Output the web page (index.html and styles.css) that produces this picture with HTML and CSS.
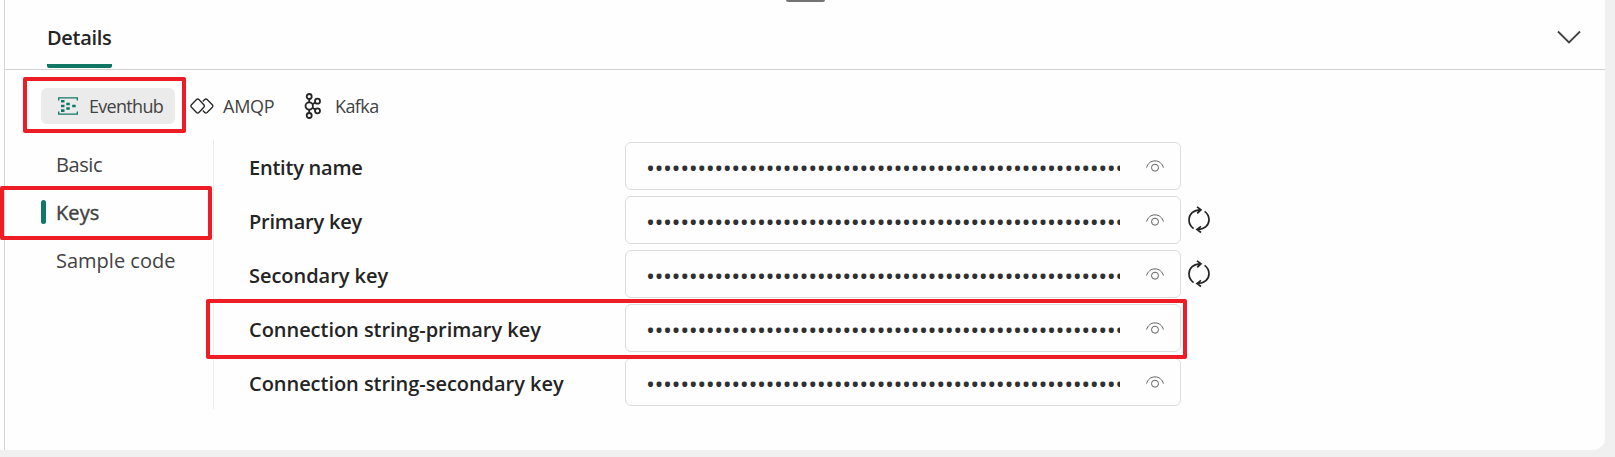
FILE: index.html
```html
<!DOCTYPE html>
<html lang="en">
<head>
<meta charset="utf-8">
<title>Details</title>
<link rel="stylesheet" href="styles.css">
</head>
<body>
<svg class="defs" width="0" height="0" aria-hidden="true">
  <symbol id="eye" viewBox="0 0 18 12"><path d="M.6 7.6C1.6 3.6 4.8.9 9 .9s7.4 2.700 8.400 6.700"/><circle cx="9" cy="7.700" r="3.500"/></symbol>
  <symbol id="refresh" viewBox="0 0 22 28"><path d="M5.600 22.600C2.700 20.600 1 17.400 1 13.800 1 8.200 5.500 3.800 12.500 3.800M9 .9l4 2.900-3.800 3.600M16.600 5.400c2.700 2 4.400 5 4.400 8.400 0 5.500-4.500 9.700-11.500 9.700M13 20.400l-4 3 4 3.100"/></symbol>
</svg>
<main class="panel">
  <div class="grip"></div>
  <header class="header">
    <h1 class="tab">Details</h1>
    <svg class="chevron" width="24" height="14" viewBox="0 0 24 14"><path d="M1 1.500 12 12.500 23 1.500"/></svg>
  </header>
  <nav class="protocols">
    <button class="protocol active">
      <svg width="20" height="18" viewBox="0 0 20 18"><path class="line" d="M.7 3.500V.9h18.600v2.600M.7 14.500v2.600h18.600v-2.600"/><path class="fill" d="M3 3h3.500v2.600H3zM3 7.700h3.500v2.600H3zM3 12.300h3.500v2.600H3zM8.300 5.700h3.500v2.600H8.300zM8.300 10.200h3.500v2.600H8.300zM14.200 7.700h3.500v2.600h-3.500z"/></svg>
      <span class="name-eventhub">Eventhub</span>
    </button>
    <button class="protocol amqp">
      <svg width="24" height="16" viewBox="0 0 24 16"><path d="M6.500 1.500Q7.700.5 8.900 1.500L13.800 6.700Q15 8 13.800 9.300L8.900 14.500Q7.700 15.500 6.500 14.500L1.500 9.300Q.3 8 1.500 6.700zM12.800 3.500 14.700 1.500Q15.900.5 17.100 1.500L22.300 6.700Q23.500 8 22.300 9.300L17.100 14.500Q15.900 15.500 14.700 14.500L12.800 12.500"/></svg>
      <span class="name-amqp">AMQP</span>
    </button>
    <button class="protocol kafka">
      <svg width="18" height="26" viewBox="0 0 18 26"><circle cx="5.200" cy="13" r="3.700"/><circle cx="5.200" cy="3.500" r="2.500"/><circle cx="5.200" cy="22.500" r="2.500"/><circle cx="13.500" cy="8.200" r="2.500"/><circle cx="13.500" cy="17.800" r="2.500"/><path d="M5.200 6v3.300M5.200 16.700V20M8.400 11.200l2.900-1.700M8.400 14.800l2.900 1.700"/></svg>
      <span class="name-kafka">Kafka</span>
    </button>
  </nav>
  <div class="content">
    <nav class="side">
      <a class="side-item basic">Basic</a>
      <a class="side-item current">Keys</a>
      <a class="side-item sample">Sample code</a>
    </nav>
    <section class="fields">
      <div class="row"><label class="l1">Entity name</label><div class="field"><span class="secret">••••••••••••••••••••••••••••••••••••••••••••••••••••••••</span><svg class="eye"><use href="#eye"/></svg></div></div>
      <div class="row"><label class="l2">Primary key</label><div class="field"><span class="secret">••••••••••••••••••••••••••••••••••••••••••••••••••••••••</span><svg class="eye"><use href="#eye"/></svg></div><svg class="refresh"><use href="#refresh"/></svg></div>
      <div class="row"><label class="l3">Secondary key</label><div class="field"><span class="secret">••••••••••••••••••••••••••••••••••••••••••••••••••••••••</span><svg class="eye"><use href="#eye"/></svg></div><svg class="refresh"><use href="#refresh"/></svg></div>
      <div class="row"><label class="l4">Connection string-primary key</label><div class="field"><span class="secret">••••••••••••••••••••••••••••••••••••••••••••••••••••••••</span><svg class="eye"><use href="#eye"/></svg></div></div>
      <div class="row"><label class="l5">Connection string-secondary key</label><div class="field"><span class="secret">••••••••••••••••••••••••••••••••••••••••••••••••••••••••</span><svg class="eye"><use href="#eye"/></svg></div></div>
    </section>
  </div>
</main>
<div class="mark mark-protocol"></div>
<div class="mark mark-keys"></div>
<div class="mark mark-connection"></div>
</body>
</html>
```
FILE: styles.css
```css
* { box-sizing: border-box; }
body {
  margin: 0;
  height: 457px;
  padding: 0 10px 7px 4px;
  background: #f0f0f0;
  font-family: "Open Sans", "Noto Sans", sans-serif;
  color: #242424;
  position: relative;
  overflow: hidden;
}
svg { fill: none; stroke: #242424; flex: none; }
.defs { position: absolute; }
.panel {
  height: 450px;
  background: #fefefe;
  border-left: 1px solid #d6d6d6;
  border-bottom-right-radius: 12px;
  box-shadow: -4px 0 0 #fefefe;
  position: relative;
}
.grip {
  position: absolute;
  left: 781px;
  top: -2px;
  width: 39px;
  height: 4px;
  border-radius: 2px;
  background: #757575;
}
.header {
  height: 70px;
  border-bottom: 1px solid #d1d1d1;
  padding: 0 24px 0 42px;
  display: flex;
  justify-content: space-between;
}
.tab {
  margin: 0;
  width: 65px;
  height: 68px;
  padding-top: 24px;
  border-bottom: 4px solid #117865;
  border-radius: 2px;
  font-size: 20px;
  line-height: 28px;
  font-weight: 600;
  letter-spacing: -0.3px;
  white-space: nowrap;
}
.chevron { margin-top: 30px; stroke: #424242; stroke-width: 1.8; }
.protocols { display: flex; padding: 18px 0 0 36px; height: 70px; }
.protocol {
  display: flex;
  align-items: center;
  height: 36px;
  padding: 0;
  border: 0;
  background: none;
  font: 400 18px/36px "Open Sans", "Noto Sans", sans-serif;
  color: #424242;
  white-space: nowrap;
}
.active { width: 134px; background: #ebebeb; border-radius: 6px; padding-left: 17px; gap: 11px; }
.line { stroke: #117865; stroke-width: 1.3; }
.fill { fill: #117865; stroke: none; }
.amqp { width: 113px; padding-left: 15px; gap: 9px; }
.amqp svg { stroke-width: 1.3; }
.kafka { padding-left: 16px; gap: 13px; }
.kafka svg { stroke-width: 1.8; }
.name-eventhub { letter-spacing: -0.7px; }
.name-amqp { letter-spacing: -0.25px; }
.name-kafka { letter-spacing: -0.6px; }
.content { display: flex; height: 269px; }
.side {
  width: 209px;
  border-right: 1px solid #ebebeb;
  padding-left: 36px;
}
.side-item {
  display: flex;
  align-items: center;
  height: 48px;
  padding-left: 15px;
  font-size: 20px;
  letter-spacing: -0.4px;
  color: #424242;
}
.side-item.sample { letter-spacing: 0; }
.side-item.current { padding-left: 0; letter-spacing: 0.1px; -webkit-text-stroke: 0.4px; }
.current::before {
  content: "";
  width: 5px;
  height: 24px;
  margin-right: 10px;
  border-radius: 3px;
  background: #117865;
}
.fields { padding: 2px 0 0 35px; display: flex; flex-direction: column; gap: 6px; }
.row { display: flex; align-items: center; height: 48px; }
.row label { width: 376px; padding-top: 2px; font-size: 20px; font-weight: 600; white-space: nowrap; }
.l1, .l2 { letter-spacing: -0.22px; }
.l3, .l4, .l5 { letter-spacing: -0.04px; }
.field {
  width: 556px;
  height: 48px;
  border: 1px solid #dcdcdc;
  border-radius: 6px;
  padding: 0 16px 0 20px;
  display: flex;
  align-items: center;
  justify-content: space-between;
}
.secret {
  width: 474px;
  padding-top: 4px;
  overflow: hidden;
  white-space: nowrap;
  color: #303030;
  font: 24px/32px "Open Sans", sans-serif;
  letter-spacing: -0.49px;
}
.eye { width: 18px; height: 12px; stroke: #616161; }
.refresh { width: 22px; height: 28px; margin-left: 7px; stroke-width: 1.7; }
.mark { position: absolute; border: 4px solid #ee1c25; border-radius: 2px; }
.mark-protocol { left: 23px; top: 77px; width: 163px; height: 56px; }
.mark-keys { left: 0; top: 186px; width: 212px; height: 54px; }
.mark-connection { left: 206px; top: 299px; width: 981px; height: 60px; }
```
